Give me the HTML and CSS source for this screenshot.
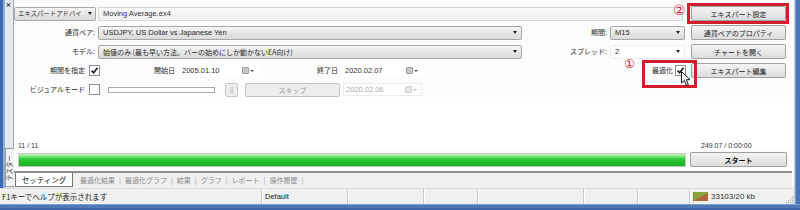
FILE: index.html
```html
<!DOCTYPE html>
<html lang="ja">
<head>
<meta charset="utf-8">
<link rel="stylesheet" href="styles.css">
</head>
<body>
<div class="frame">
  <div class="main-row">
    <div class="col">
      <div class="upper">
        <div class="leftbar">
          <span class="close">×</span>
          <span class="vtab"><span class="vtext">テスター</span></span>
        </div>
        <div class="content">
          <div class="settings">
            <div class="row">
              <div class="combo btnlike w-ea"><span class="ctext ea-text">エキスパートアドバイ</span><span class="tri"></span></div>
              <div class="field w-file">Moving Average.ex4</div>
              <div class="button w-btn">エキスパート設定</div>
            </div>
            <div class="row">
              <div class="label w-l1">通貨ペア:</div>
              <div class="combo btnlike w-big"><span class="ctext latin">USDJPY, US Dollar vs Japanese Yen</span><span class="tri"></span></div>
              <div class="label w-l2">期間:</div>
              <div class="combo btnlike w-small"><span class="ctext latin">M15</span><span class="tri"></span></div>
              <div class="button w-btn">通貨ペアのプロパティ</div>
            </div>
            <div class="row">
              <div class="label w-l1">モデル:</div>
              <div class="combo btnlike w-big"><span class="ctext">始値のみ (最も早い方法。バーの始めにしか動かないEA向け)</span><span class="tri"></span></div>
              <div class="label w-l2">スプレッド:</div>
              <div class="combo flat w-small"><span class="ctext latin">2</span><span class="tri"></span></div>
              <div class="button w-btn">チャートを開く</div>
            </div>
            <div class="row">
              <div class="label w-l3">期間を指定</div>
              <div class="check"><svg width="9" height="9" viewBox="0 0 9 9"><path d="M1.5 4.5 L3.6 6.8 L7.5 1.8" fill="none" stroke="#1a1a1a" stroke-width="1.6"/></svg></div>
              <div class="label w-l4">開始日</div>
              <div class="date w-d1"><span class="latin">2005.01.10</span><span class="cal"><span class="calbox"></span><span class="tri small"></span></span></div>
              <div class="label w-l5">終了日</div>
              <div class="date w-d2"><span class="latin">2020.02.07</span><span class="cal"><span class="calbox"></span><span class="tri small"></span></span></div>
              <div class="opt">
                <span class="label">最適化</span>
                <div class="check opt-check"><svg width="9" height="9" viewBox="0 0 9 9"><path d="M1.5 4.5 L3.6 6.8 L7.5 1.8" fill="none" stroke="#1a1a1a" stroke-width="1.6"/></svg></div>
                <div class="button w-btn">エキスパート編集</div>
              </div>
            </div>
            <div class="row">
              <div class="label w-l3">ビジュアルモード</div>
              <div class="check"></div>
              <div class="slider"></div>
              <div class="button pause">||</div>
              <div class="button disabled w-skip">スキップ</div>
              <div class="date disabled w-d3"><span class="latin">2020.02.06</span><span class="cal"><span class="calbox"></span><span class="tri small"></span></span></div>
            </div>
          </div>
          <div class="spacer"></div>
          <div class="info">
            <span class="latin">11 / 11</span>
            <span class="latin info-right">249.07 / 0:00:00</span>
          </div>
          <div class="progress-row">
            <div class="progress"><div class="fill"></div></div>
            <div class="button start">スタート</div>
          </div>
          <div class="tabs">
            <span class="tab active">セッティング</span>
            <span class="tab">最適化結果</span><span class="sep">|</span>
            <span class="tab">最適化グラフ</span><span class="sep">|</span>
            <span class="tab">結果</span><span class="sep">|</span>
            <span class="tab">グラフ</span><span class="sep">|</span>
            <span class="tab">レポート</span><span class="sep">|</span>
            <span class="tab">操作履歴</span><span class="sep">|</span>
          </div>
        </div>
      </div>
      <div class="status">
        <div class="scell s1">F1キーでヘルプが表示されます</div>
        <div class="scell s2 latin">Default</div>
        <div class="scell s3"></div>
        <div class="scell s4"></div>
        <div class="scell s5"></div>
        <div class="scell s6"></div>
        <div class="scell s7"></div>
        <div class="scell s8">
          <svg class="conn" width="15" height="9" viewBox="0 0 15 9">
            <rect x="0" y="0" width="15" height="9" fill="#6f9a2e"/>
            <polygon points="0,9 15,1 15,9" fill="#a8452c"/>
            <path d="M2 0V9M4 0V9M6 0V9M8 0V9M10 0V9M12 0V9M14 0V9" stroke="#d9c86a" stroke-width="0.6" opacity="0.8"/>
          </svg>
          <span class="latin kb">33103/20 kb</span>
        </div>
        <div class="grip">
          <svg width="9" height="9" viewBox="0 0 9 9">
            <g fill="#a9b3c0">
              <rect x="7" y="1" width="1.2" height="1.2"/>
              <rect x="5" y="3" width="1.2" height="1.2"/><rect x="7" y="3" width="1.2" height="1.2"/>
              <rect x="3" y="5" width="1.2" height="1.2"/><rect x="5" y="5" width="1.2" height="1.2"/><rect x="7" y="5" width="1.2" height="1.2"/>
              <rect x="1" y="7" width="1.2" height="1.2"/><rect x="3" y="7" width="1.2" height="1.2"/><rect x="5" y="7" width="1.2" height="1.2"/><rect x="7" y="7" width="1.2" height="1.2"/>
            </g>
          </svg>
        </div>
      </div>
    </div>
    <div class="rborder"></div>
  </div>
  <div class="bborder"></div>

  <div class="redbox box-settings"></div>
  <div class="redbox box-opt"></div>
  <span class="mark mark2">②</span>
  <span class="mark mark1">①</span>
  <svg class="cursor" width="11" height="16" viewBox="0 0 11 16">
    <polygon points="0.5,0.5 0.5,12 3.3,9.4 5.4,14.5 7.3,13.7 5.3,8.7 9,8.7" fill="#fff" stroke="#111" stroke-width="1"/>
  </svg>
</div>
</body>
</html>
```

FILE: styles.css
```css
* { box-sizing: border-box; }
html, body { margin: 0; padding: 0; }
body {
  width: 800px;
  height: 210px;
  overflow: hidden;
  background: #fff;
  font-family: "Noto Sans CJK JP", "Liberation Sans", sans-serif;
  font-size: 7px;
  color: #2a2a2a;
}
.latin { font-family: "Liberation Sans", "Noto Sans CJK JP", sans-serif; font-size: 7.5px; }

.frame { position: relative; width: 800px; height: 210px; display: flex; flex-direction: column; }
.main-row { display: flex; height: 204px; }
.col { flex: 1; display: flex; flex-direction: column; }
.upper { height: 188px; display: flex; }
.rborder {
  width: 6px;
  background: linear-gradient(to right, #b9cbe3 0 1px, #7d9fcf 1px 2px, #4a76b6 2px);
}
.bborder {
  height: 6px;
  background: linear-gradient(#7d9fcf 0 1px, #4f79b6 1px 4px, #3d66a6 4px);
}

/* left strip */
.leftbar {
  width: 14px;
  background: linear-gradient(to right, #3d6bb1 0 3px, #8fb0d8 3px 5px, #e4e9f0 5px 13px, #a3abb6 13px 14px);
  display: flex;
  flex-direction: column;
  align-items: center;
  position: relative;
}
.close { font-family: "DejaVu Sans", sans-serif; font-size: 7px; line-height: 8px; color: #333; margin: 1px 0 0 3px; font-weight: bold; }
.vtab {
  margin-top: auto;
  margin-bottom: 1px;
  margin-left: 4px;
  width: 9px;
  height: 39px;
  background: #f4f4f4;
  border: 1px solid #9a9a9a;
  border-right: none;
  display: flex;
  align-items: center;
  justify-content: center;
}
.vtext {
  writing-mode: vertical-rl;
  text-orientation: sideways;
  transform: rotate(180deg);
  font-size: 6.5px;
  line-height: 7px;
  color: #333;
}

/* content */
.content {
  flex: 1;
  display: flex;
  flex-direction: column;
  background: #fcfcfc;
}
.settings {
  display: flex;
  flex-direction: column;
  gap: 4px;
  padding: 6px 8px 0 0;
}
.row { display: flex; align-items: center; height: 15px; }

.label { text-align: right; white-space: nowrap; color: #2a2a2a; line-height: 15px; }
.w-l1 { width: 84px; padding-right: 3px; }
.w-l2 { width: 88px; padding-right: 3px; }
.w-l3 { width: 73px; padding-right: 2px; }
.w-l4 { width: 78px; padding-right: 3px; }
.w-l5 { width: 83px; padding-right: 3px; }

.combo {
  height: 14px;
  display: flex;
  align-items: center;
  padding: 0 4px 0 4px;
  border: 1px solid #a7a7a7;
  border-radius: 2px;
  overflow: hidden;
}
.btnlike { background: linear-gradient(#f6f6f6, #e6e6e6 50%, #dcdcdc); }
.flat { border-color: #ececec; background: #fff; }
.ctext { flex: 1; white-space: nowrap; overflow: hidden; }
.tri {
  width: 0; height: 0;
  border-left: 2.5px solid transparent;
  border-right: 2.5px solid transparent;
  border-top: 3px solid #222;
  flex: none;
}
.tri.small { border-left-width: 2px; border-right-width: 2px; border-top-width: 2.5px; border-top-color: #555; margin-left: 1px; }
.w-ea { width: 82px; padding-left: 3px; padding-right: 3px; }
.ea-text { font-size: 6.4px; margin-right: 2px; overflow: visible; }
.w-big { width: 424px; }
.w-small { width: 75px; }

.field {
  width: 585px;
  height: 14px;
  margin-left: 2px;
  border: 1px solid #d6d6d6;
  background: linear-gradient(#fafafa, #f0f0f0);
  padding-left: 4px;
  font-family: "Liberation Sans", sans-serif;
  font-size: 7.5px;
  line-height: 12px;
  color: #333;
}

.button {
  height: 15px;
  border: 1px solid #a0a0a0;
  border-radius: 2px;
  background: linear-gradient(#f4f4f4, #e9e9e9 50%, #dcdcdc);
  display: flex;
  align-items: center;
  justify-content: center;
  white-space: nowrap;
  color: #222;
}
.w-btn { width: 95px; margin-left: auto; }
.row > .w-btn { margin-left: 6px; }
.row:first-child > .w-btn { margin-left: 8px; }

.check {
  width: 11px;
  height: 11px;
  margin-left: 2px;
  border: 1px solid #8e8f8f;
  background: #fff;
  display: flex;
  align-items: center;
  justify-content: center;
}

.date {
  height: 13px;
  margin-left: 2px;
  background: #fff;
  display: flex;
  align-items: center;
  padding: 0 4px 0 2px;
  color: #333;
}
.date .latin { flex: 1; }
.cal { display: flex; align-items: center; }
.calbox { width: 7px; height: 7px; background: #c9c9c9; border: 1px solid #9a9a9a; border-radius: 1px; }
.w-d1 { width: 78px; }
.w-d2 { width: 79px; }
.w-d3 { width: 79px; margin-left: 3px; }
.date.disabled { color: #aaa; border: 1px solid #ececec; }
.date.disabled .calbox { background: #e6e6e6; border-color: #cfcfcf; }
.date.disabled .tri { border-top-color: #bbb; }

.opt { margin-left: auto; display: flex; align-items: center; }
.opt-check { margin-left: 2px; }
.opt .w-btn { margin-left: 5px; }

.slider {
  width: 107px;
  height: 6px;
  margin-left: 8px;
  border: 1px solid #a8a8a8;
  background: #fff;
}
.pause {
  width: 13px;
  height: 14px;
  margin-left: 10px;
  color: #aaa;
  font-family: "Liberation Sans", sans-serif;
  font-size: 7px;
  border-color: #c4c4c4;
  background: #ededed;
}
.button.disabled { color: #999; border-color: #c4c4c4; background: #ededed; }
.w-skip { width: 95px; height: 14px; margin-left: 7px; }

.spacer { flex: 1; background: #fff; }

.info {
  height: 10px;
  display: flex;
  align-items: center;
  padding-left: 4px;
  margin-bottom: 2px;
  color: #333;
  background: #fff;
}
.info .latin { font-size: 7px; }
.info-right { margin-left: auto; width: 98px; padding-left: 5px; }

.progress-row {
  display: flex;
  align-items: center;
  height: 15px;
  padding: 0 7px 0 4px;
  margin-bottom: 4px;
  background: #fff;
}
.progress {
  flex: 1;
  height: 14px;
  border: 1px solid #c9c9c9;
  background: #f4f4f4;
}
.fill {
  height: 100%;
  width: 100%;
  background: linear-gradient(#c4f5bb 0, #8ce886 18%, #2fcc38 40%, #1dbd29 70%, #19ad24 100%);
}
.start { width: 97px; margin-left: 4px; font-weight: bold; color: #111; }

.tabs {
  height: 17px;
  border-top: 2px solid #8c8c8c;
  margin-right: 2px;
  background: #f0f0f0;
  display: flex;
  align-items: flex-start;
  padding-left: 1px;
  color: #8a8a8a;
  font-size: 7px;
}
.tab { line-height: 14px; padding: 0 3px; white-space: nowrap; }
.tab.active {
  width: 58px;
  text-align: center;
  color: #1a1a1a;
  font-size: 7.5px;
  background: #fff;
  border: 1px solid #7a7a7a;
  border-top: none;
  margin-right: 4px;
  height: 14px;
}
.sep { line-height: 14px; color: #9a9a9a; padding: 0 1px; }

/* status bar */
.status {
  height: 16px;
  display: flex;
  align-items: stretch;
  background: #f0f0f0;
  border-top: 1px solid #dcdcdc;
  font-size: 7.5px;
  color: #222;
}
.scell {
  border-right: 1px solid #c9c9c9;
  box-shadow: 1px 0 0 #fff;
  display: flex;
  align-items: center;
  padding-left: 3px;
  white-space: nowrap;
}
.s1 { width: 262px; padding-left: 2px; }
.s2 { width: 86px; }
.s3 { width: 76px; }
.s4 { width: 54px; }
.s5 { width: 106px; }
.s6 { width: 54px; }
.s7 { width: 52px; }
.s8 { width: 95px; border-right: none; box-shadow: none; }
.conn { margin-right: 3px; }
.kb { font-size: 8px; color: #333; }
.grip { flex: 1; display: flex; align-items: flex-end; justify-content: flex-end; }

/* annotations */
.redbox { position: absolute; border: 3px solid #d21e2c; }
.box-settings { left: 687px; top: 3px; width: 102px; height: 21px; }
.box-opt { left: 642px; top: 60px; width: 55px; height: 28px; }
.mark { position: absolute; color: #d21e2c; font-family: "DejaVu Sans", sans-serif; line-height: 1; }
.mark2 { left: 673px; top: 3px; font-size: 14px; }
.mark1 { left: 624px; top: 58px; font-size: 12px; }
.cursor { position: absolute; left: 681px; top: 71px; }
```
